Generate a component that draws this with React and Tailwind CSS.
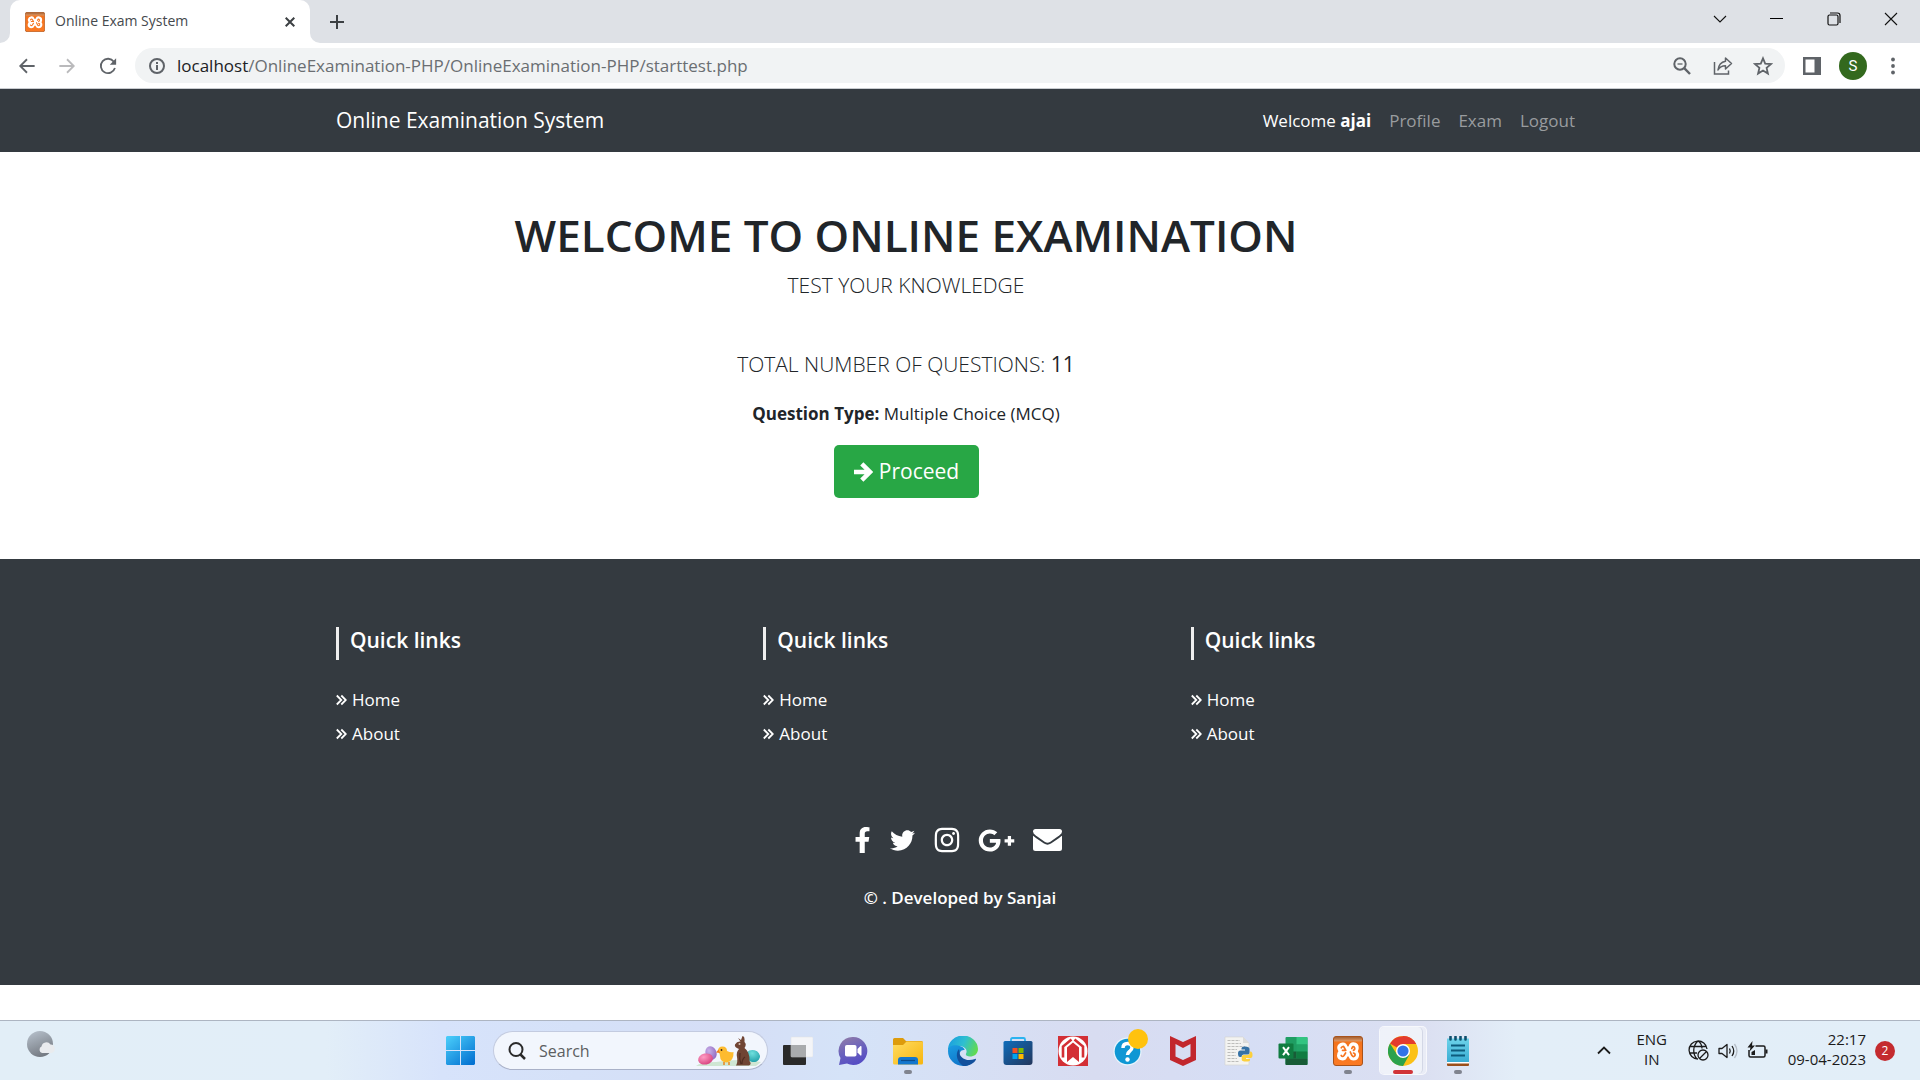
import React from "react";
import {
  FaFacebookF,
  FaTwitter,
  FaInstagram,
  FaGooglePlusG,
  FaEnvelope,
} from "react-icons/fa";

function XamppIcon({ className }) {
  return (
    <svg viewBox="0 0 30 30" className={className} aria-hidden="true">
      <defs>
        <linearGradient id="xamppTop" x1="0" y1="0" x2="0" y2="1">
          <stop offset="0" stopColor="#9c5a2c" />
          <stop offset="0.14" stopColor="#d9905c" />
          <stop offset="0.2" stopColor="#f4731d" />
          <stop offset="1" stopColor="#fb7a24" />
        </linearGradient>
      </defs>
      <rect x="0.5" y="0.5" width="29" height="29" rx="2.5" fill="url(#xamppTop)" stroke="#a9531b" />
      <path
        d="M9.500 6.500Q13 6 14.300 10Q15 11 15.700 10Q17 6 20.500 6.300Q26 7 25.700 12Q25.500 14 24.800 15.200Q26.500 17.500 26 20Q25 24.500 20.500 24.500Q17 24.500 15.800 21Q15 19.500 14.200 21Q13 24.500 9.500 24.500Q4.500 24 4 20Q3.800 17 5.400 15.200Q4 13 4.200 11Q5 7 9.500 6.500Z"
        fill="#fff"
      />
      <path
        d="M8.300 11.800Q10 9.300 11.200 11.500L12.800 14.300H9.500M8.200 19.500Q9.500 21.500 11 19.500L12.600 17M18.800 12.500Q20 9.300 21.500 11.500Q22.300 13.500 20.500 14.300M17.300 16L18.800 19.300Q20.500 21.700 22 19.500Q22.500 17.500 20.500 17"
        fill="none"
        stroke="#f6741f"
        strokeWidth="1.700"
        strokeLinecap="round"
        strokeLinejoin="round"
      />
    </svg>
  );
}

function Stroke({ size = "h-5 w-5", box = "0 0 20 20", width = 2, children }) {
  return (
    <svg
      viewBox={box}
      className={size}
      fill="none"
      stroke="currentColor"
      strokeWidth={width}
      aria-hidden="true"
    >
      {children}
    </svg>
  );
}

function TabStrip() {
  return (
    <div className="flex h-[43px] bg-[#dee1e6] pl-[10px]">
      <div className="relative flex h-full w-[300px] items-center rounded-t-[10px] bg-white pr-[10px] pl-[15px]">
        <svg viewBox="0 0 10 10" className="absolute bottom-0 -left-[10px] h-[10px] w-[10px]" aria-hidden="true">
          <path d="M10 0V10H0A10 10 0 0 0 10 0Z" fill="#fff" />
        </svg>
        <svg viewBox="0 0 10 10" className="absolute -right-[10px] bottom-0 h-[10px] w-[10px]" aria-hidden="true">
          <path d="M0 0V10H10A10 10 0 0 1 0 0Z" fill="#fff" />
        </svg>
        <XamppIcon className="h-5 w-5" />
        <span className="ml-[10px] flex-1 pb-0.5 text-[14px] whitespace-nowrap text-[#45494d]">Online Exam System</span>
        <button aria-label="Close tab" className="flex h-5 w-5 items-center justify-center text-[#3c4043]">
          <Stroke size="h-[10px] w-[10px]" box="0 0 10 10">
            <path d="M0.700 0.700L9.300 9.300M9.300 0.700L0.700 9.300" />
          </Stroke>
        </button>
      </div>
      <button aria-label="New tab" className="ml-[17px] flex w-5 items-center justify-center text-[#3c4043]">
        <Stroke size="h-4 w-4" box="0 0 16 16">
          <path d="M8 1V15M1 8H15" />
        </Stroke>
      </button>
      <div className="ml-auto flex h-[37px] text-[#111]">
        <button aria-label="Search tabs" className="flex w-[57px] items-center justify-center">
          <Stroke size="h-[14px] w-[14px]" box="0 0 14 14" width={1.1}>
            <path d="M1 4L7 10L13 4" />
          </Stroke>
        </button>
        <button aria-label="Minimize" className="flex w-[57px] items-center justify-center">
          <span className="h-px w-[13px] bg-black" />
        </button>
        <button aria-label="Restore" className="flex w-[57px] items-center justify-center">
          <Stroke size="h-[14px] w-[14px]" box="0 0 14 14" width={1.2}>
            <rect x="1" y="3" width="10" height="10" rx="1.500" />
            <path d="M3 1H10.500Q13 1 13 3.500V11" />
          </Stroke>
        </button>
        <button aria-label="Close" className="flex w-[58px] items-center justify-center">
          <Stroke size="h-[14px] w-[14px]" box="0 0 14 14" width={1.1}>
            <path d="M1 1L13 13M13 1L1 13" />
          </Stroke>
        </button>
      </div>
    </div>
  );
}

function Toolbar() {
  return (
    <div className="flex h-[46px] items-center border-b border-[#c9ccd0] bg-white pl-[17px] text-[#5f6368]">
      <button aria-label="Back" className="w-5">
        <Stroke size="h-[18px] w-5">
          <path d="M18.500 10H3M10 2.500L2.500 10L10 17.500" />
        </Stroke>
      </button>
      <button aria-label="Forward" className="ml-5 w-5 text-[#bababc]">
        <Stroke size="h-[18px] w-5">
          <path d="M1.500 10H17M10 2.500L17.500 10L10 17.500" />
        </Stroke>
      </button>
      <button aria-label="Reload" className="ml-[21px] w-5">
        <Stroke size="h-[18px] w-5">
          <path d="M16.500 5.200A8 8 0 1 0 17.700 12.300" />
          <path d="M19 1.500V8.500H12Z" fill="currentColor" stroke="none" />
        </Stroke>
      </button>
      <div className="ml-[17px] flex h-[35px] flex-1 items-center rounded-full bg-[#f1f3f4] pr-3 pl-[14px]">
        <Stroke size="h-4 w-4" box="0 0 16 16">
          <circle cx="8" cy="8" r="7" />
          <path d="M8 7V12M8 4V6" />
        </Stroke>
        <div className="ml-3 flex-1 text-[17px] leading-6 whitespace-nowrap text-[#6a6e72]">
          <span className="text-[#202124]">localhost</span>/OnlineExamination-PHP/OnlineExamination-PHP/starttest.php
        </div>
        <button aria-label="Zoom" className="w-5">
          <Stroke size="h-[18px] w-[18px]" box="0 0 18 18">
            <circle cx="7" cy="7" r="5.700" />
            <path d="M11.200 11.200L17 17" strokeWidth="2.400" />
            <path d="M4.500 7H9.500" strokeWidth="1.300" />
          </Stroke>
        </button>
        <button aria-label="Share" className="ml-5 w-5">
          <Stroke width={1.5}>
            <path d="M1.500 6V18H15.500V14.500" />
            <path d="M12.500 2L18.500 7.500L12.500 13V9.800C9 9.800 6.500 11 5 14C5.500 9.500 8 6 12.500 5.200Z" strokeLinejoin="round" />
          </Stroke>
        </button>
        <button aria-label="Bookmark" className="ml-5 w-5">
          <Stroke width={1.8}>
            <path d="M10 2.300L12.200 7.600L18 8.100L13.600 11.900L14.900 17.500L10 14.500L5.100 17.500L6.400 11.900L2 8.100L7.800 7.600Z" />
          </Stroke>
        </button>
      </div>
      <button aria-label="Side panel" className="ml-[18px] w-[18px]">
        <svg viewBox="0 0 18 18" className="h-[18px] w-[18px]" aria-hidden="true">
          <path d="M0 0H18V18H0ZM2.500 2.500V15.500H11.500V2.500Z" fill="#5f6368" fillRule="evenodd" />
        </svg>
      </button>
      <button className="ml-[18px] h-7 w-7 rounded-full bg-[#33691e] text-center font-[Roboto,_sans-serif] text-[15px] leading-7 text-white">S</button>
      <button aria-label="Menu" className="mr-[17px] ml-4 w-5">
        <svg viewBox="0 0 20 20" className="h-5 w-5" fill="currentColor" aria-hidden="true">
          <circle cx="10" cy="3.500" r="1.900" />
          <circle cx="10" cy="10" r="1.900" />
          <circle cx="10" cy="16.500" r="1.900" />
        </svg>
      </button>
    </div>
  );
}

function SiteNav() {
  return (
    <nav className="h-[63px] bg-[#343a40]">
      <div className="mx-auto flex h-full max-w-[1282px] items-center px-[17px]">
        <a href="#home" className="text-[21px] whitespace-nowrap text-white">Online Examination System</a>
        <div className="ml-auto flex gap-[18px] pr-[9px] text-[17px] whitespace-nowrap text-[#999c9f]">
          <a href="#me" className="text-white">
            Welcome <b>ajai</b>
          </a>
          <a href="#profile">Profile</a>
          <a href="#exam">Exam</a>
          <a href="#logout">Logout</a>
        </div>
      </div>
    </nav>
  );
}

function Hero() {
  return (
    <main className="mx-auto w-full max-w-[1282px] px-[17px] pt-14 pb-[61px] text-[#212529]">
      <div className="flex flex-col items-center pr-[108px] text-center">
        <h1 className="text-[44px] leading-[54px] font-semibold whitespace-nowrap">WELCOME TO ONLINE EXAMINATION</h1>
        <p className="mt-[6px] text-[21px] leading-[34px] font-light">TEST YOUR KNOWLEDGE</p>
        <p className="mt-[45px] text-[21px] leading-[34px] font-light">
          TOTAL NUMBER OF QUESTIONS: <span className="font-normal">11</span>
        </p>
        <p className="mt-[19px] text-[17px] leading-[27px]">
          <b>Question Type:</b> Multiple Choice (MCQ)
        </p>
        <button className="mt-[18px] flex h-[53px] w-[145px] items-center justify-center gap-[6px] rounded-[5px] bg-[#28a745] text-[21px] text-white">
          <svg viewBox="0 0 20 20" className="h-5 w-5" fill="none" stroke="currentColor" strokeWidth="4.500" aria-hidden="true">
            <path d="M1 10H17M8.800 1.800L17 10L8.800 18.200" />
          </svg>
          Proceed
        </button>
      </div>
    </main>
  );
}

function QuickLinks() {
  return (
    <section className="px-[17px]">
      <h5 className="h-[33px] border-l-[3px] border-[#eee] pl-[11px] text-[21px] leading-[27px] font-semibold">Quick links</h5>
      <ul className="mt-[23px] text-[17px] leading-[34px]">
        {["Home", "About"].map((label) => (
          <li key={label}>
            <a href={"#" + label} className="flex items-center gap-[5px]">
              <svg viewBox="0 0 11 12" className="h-3 w-[11px]" fill="none" stroke="currentColor" strokeWidth="1.800" aria-hidden="true">
                <path d="M0.800 1.500L5.300 6L0.800 10.500M5.300 1.500L9.800 6L5.300 10.500" />
              </svg>
              {label}
            </a>
          </li>
        ))}
      </ul>
    </section>
  );
}

function SiteFooter() {
  return (
    <footer className="h-[426px] bg-[#343a40] pt-[68px] text-white">
      <div className="mx-auto grid max-w-[1282px] grid-cols-3">
        <QuickLinks />
        <QuickLinks />
        <QuickLinks />
      </div>
      <div className="mt-[75px] flex h-[28px] items-center justify-center pr-[5px]">
        <a href="#facebook" aria-label="Facebook" className="mr-[19px]">
          <FaFacebookF className="h-[26px] w-[17px]" />
        </a>
        <a href="#twitter" aria-label="Twitter" className="mr-[19px]">
          <FaTwitter className="h-[25px] w-[25px]" />
        </a>
        <a href="#instagram" aria-label="Instagram" className="mr-[18px]">
          <FaInstagram className="h-[28px] w-[26px]" />
        </a>
        <a href="#google" aria-label="Google Plus" className="mr-[18px]">
          <FaGooglePlusG className="h-[37px] w-[37px]" />
        </a>
        <a href="#mail" aria-label="Email">
          <svg viewBox="0 0 29 22" className="h-[22px] w-[29px]" fill="currentColor" aria-hidden="true">
            <path d="M2.500 0H26.500Q29 0 29 2.500Q29 4.500 26.500 6.300L17 13Q14.500 14.600 12 13L2.500 6.300Q0 4.500 0 2.500Q0 0 2.500 0Z" />
            <path d="M0 6.700Q1 7.700 11 14.500Q14.500 16.800 18 14.500Q28 7.700 29 6.700V19.500Q29 22 26.500 22H2.500Q0 22 0 19.500Z" />
          </svg>
        </a>
      </div>
      <p className="mt-[30px] text-center text-[17px] leading-[27px] font-semibold">© . Developed by Sanjai</p>
    </footer>
  );
}

function StartIcon() {
  return (
    <svg viewBox="0 0 29 29" className="h-[29px] w-[29px]" aria-hidden="true">
      <defs>
        <linearGradient id="winBlue" gradientUnits="userSpaceOnUse" x1="0" y1="0" x2="24" y2="29">
          <stop offset="0" stopColor="#4cd0fb" />
          <stop offset="1" stopColor="#0573d2" />
        </linearGradient>
      </defs>
      <path d="M1 0H14V14H0V1ZM15 0H28L29 1V14H15ZM0 15H14V29H1L0 28ZM15 15H29V28L28 29H15Z" fill="url(#winBlue)" />
    </svg>
  );
}

function EasterArt() {
  return (
    <svg viewBox="0 0 66 32" className="h-8 w-[66px]" aria-hidden="true">
      <defs>
        <radialGradient id="eggPink" cx="0.4" cy="0.3" r="0.8">
          <stop offset="0" stopColor="#ff9cc4" />
          <stop offset="1" stopColor="#d33a78" />
        </radialGradient>
        <radialGradient id="eggLilac" cx="0.4" cy="0.3" r="0.8">
          <stop offset="0" stopColor="#c9b0e8" />
          <stop offset="1" stopColor="#8a62bd" />
        </radialGradient>
        <radialGradient id="eggTeal" cx="0.4" cy="0.3" r="0.8">
          <stop offset="0" stopColor="#6fe0dd" />
          <stop offset="1" stopColor="#1b9ba5" />
        </radialGradient>
      </defs>
      <path d="M0 31Q4 27 20 27Q45 23 65 27L60 31Z" fill="#cfe6d3" />
      <ellipse cx="15" cy="18" rx="5.500" ry="7" fill="url(#eggLilac)" transform="rotate(-20 15 18)" />
      <ellipse cx="9.500" cy="24" rx="7.500" ry="5.500" fill="url(#eggPink)" transform="rotate(-12 9.500 24)" />
      <path d="M22 16Q22 11.500 26.500 11.500Q31 11.500 31 16Q35 18 37.500 17Q38 26 31 27.500Q24 27 24 21Q24 19 22 16Z" fill="#fdbb2f" />
      <path d="M22.500 14.500L20 17.500L24 18Z" fill="#f07d1b" />
      <circle cx="25.500" cy="15" r="0.900" fill="#3b2415" />
      <path d="M28 27V30M33 27V30" stroke="#e88720" strokeWidth="1.500" />
      <ellipse cx="57" cy="21" rx="7" ry="6" fill="url(#eggTeal)" transform="rotate(15 57 21)" />
      <path d="M45 5L46.500 1Q49 1 48.500 7Q51 9 48.500 13Q54 17 53.500 26Q56 29 53 30.500H40Q42 27 41 22Q40 17 43 14Q38 12 39 9.500Q41 6 44.500 6.500L42 3Z" fill="#704534" />
      <circle cx="43.500" cy="9" r="1" fill="#d9c3b5" />
      <path d="M44 18Q43 24 45 29M49 22Q46 24 46 29" stroke="#4f2d20" strokeWidth="1.200" fill="none" />
    </svg>
  );
}

const glyphClass = "h-[30px] w-[30px]";

const taskIcons = [
  {
    name: "Task view",
    art: (
      <svg viewBox="0 0 30 30" className={glyphClass}>
        <rect x="0" y="9" width="23" height="20" rx="1" fill="#2a2a2a" />
        <rect x="8" y="1" width="22" height="20" rx="1" fill="#f7f7f7" fillOpacity="0.900" stroke="#e2e2e2" strokeWidth="0.500" />
        <path d="M8 9H23V21H8Z" fill="#a9abad" />
      </svg>
    ),
  },
  {
    name: "Chat",
    art: (
      <svg viewBox="0 0 30 30" className={glyphClass}>
        <defs>
          <linearGradient id="chatFill" x1="0.200" y1="0" x2="0.600" y2="1">
            <stop offset="0" stopColor="#8f7ba8" />
            <stop offset="0.500" stopColor="#6a62bd" />
            <stop offset="1" stopColor="#544bc4" />
          </linearGradient>
        </defs>
        <path d="M15 1A14 14 0 1 1 9 27.500L1 29L2.500 22A14 14 0 0 1 15 1Z" fill="url(#chatFill)" />
        <rect x="7" y="9" width="11.500" height="11.500" rx="1.800" fill="#fff" />
        <path d="M19.500 13L22.500 10Q23.500 9.500 23.500 11V18.500Q23.500 20 22.500 19.500L19.500 16.500Z" fill="#fff" />
      </svg>
    ),
  },
  {
    name: "File Explorer",
    mark: "gray",
    art: (
      <svg viewBox="0 0 30 30" className={glyphClass}>
        <defs>
          <linearGradient id="folderFill" x1="0" y1="0" x2="1" y2="1">
            <stop offset="0" stopColor="#ffdc62" />
            <stop offset="1" stopColor="#f7b50e" />
          </linearGradient>
        </defs>
        <path d="M0 3.500Q0 2 1.500 2H10L13 5H28.500Q30 5 30 6.500V12H0Z" fill="#dd9b0c" />
        <path d="M0 9H10L13.500 5.500H29Q30 5.500 30 7V27Q30 28.500 28.500 28.500H1.500Q0 28.500 0 27Z" fill="url(#folderFill)" />
        <path d="M5 28.500V24Q5 21 8 21H22Q25 21 25 24V28.500Z" fill="#1377ce" />
        <path d="M8 24.500H22" stroke="#0b4c8c" strokeWidth="1.200" />
      </svg>
    ),
  },
  {
    name: "Edge",
    art: (
      <svg viewBox="0 0 30 30" className={glyphClass}>
        <defs>
          <linearGradient id="edgeTop" x1="0" y1="0.300" x2="1" y2="0.600">
            <stop offset="0" stopColor="#1a9fe0" />
            <stop offset="0.500" stopColor="#2fbfd0" />
            <stop offset="1" stopColor="#63db4c" />
          </linearGradient>
          <linearGradient id="edgeLeft" x1="0" y1="0" x2="0.500" y2="1">
            <stop offset="0" stopColor="#1b9de2" />
            <stop offset="1" stopColor="#0f74c9" />
          </linearGradient>
        </defs>
        <path d="M0 14A15 14 0 0 1 30 13C30 18 26 20.500 22 20.500C18.500 20.500 17 19 18.300 17C19.500 14 17 10.500 12 10C6 9.500 1.500 12 0 14Z" fill="url(#edgeTop)" />
        <path d="M0 15C0 9.500 6 8.500 10 9.500C15 10.500 17 13 16.500 14C12.500 13.500 11 17 12 20C14 26 20 28.500 24 26.500C21.500 29.500 18 30 15 30A15 15 0 0 1 0 15Z" fill="url(#edgeLeft)" />
        <path d="M11 13C6.500 18 9.500 27 15.500 30C21 30 26 27.500 28 23.500C28 22.500 27.500 22.700 27 23C18 26.500 10.500 21 11.500 15Z" fill="#12509c" />
      </svg>
    ),
  },
  {
    name: "Microsoft Store",
    art: (
      <svg viewBox="0 0 30 30" className={glyphClass}>
        <defs>
          <linearGradient id="bagFill" x1="0" y1="0" x2="1" y2="1">
            <stop offset="0" stopColor="#0f6dbb" />
            <stop offset="1" stopColor="#23365c" />
          </linearGradient>
        </defs>
        <path d="M8 6V3.500Q8 2 9.500 2H20.500Q22 2 22 3.500V6" fill="none" stroke="#2bb3f0" strokeWidth="1.800" />
        <path d="M2 5H28Q29.500 5 29.500 6.500V26Q29.500 29 26.500 29H3.500Q0.500 29 0.500 26V6.500Q0.500 5 2 5Z" fill="url(#bagFill)" />
        <path d="M9.500 12H14.500V17H9.500Z" fill="#f25022" />
        <path d="M15.500 12H20.500V17H15.500Z" fill="#7fba00" />
        <path d="M9.500 18H14.500V23H9.500Z" fill="#00a4ef" />
        <path d="M15.500 18H20.500V23H15.500Z" fill="#ffb900" />
      </svg>
    ),
  },
  {
    name: "Reader",
    art: (
      <svg viewBox="0 0 30 30" className={glyphClass}>
        <path d="M0 0H30V30H0Z" fill="#d32f35" />
        <circle cx="15" cy="15" r="14.500" fill="#fff" />
        <path d="M9 26V11.500L15 6.500L21 11.500V26L15 21Z" fill="#d32f35" />
        <path d="M5 21.500V10.500L13.500 3.500M25 21.500V10.500L16.500 3.500" fill="none" stroke="#d32f35" strokeWidth="2.600" />
      </svg>
    ),
  },
  {
    name: "Help",
    badge: true,
    art: (
      <svg viewBox="0 0 30 30" className={glyphClass}>
        <circle cx="14.500" cy="15.500" r="14" fill="#e9f5fc" />
        <circle cx="14.500" cy="15.500" r="12.800" fill="#0f97d4" />
        <path d="M10 12Q10 7.500 14.500 7.500Q19 7.500 19 11.500Q19 13.500 16.500 15.500Q14.500 17 14.500 19" fill="none" stroke="#fff" strokeWidth="3.500" />
        <circle cx="14.500" cy="23.500" r="2.200" fill="#fff" />
      </svg>
    ),
  },
  {
    name: "McAfee",
    art: (
      <svg viewBox="0 0 30 30" className={glyphClass}>
        <path d="M2 0L15 6L28 0V24L15 30L2 24ZM7.500 8V20.500L15 24L22.500 20.500V8L15 12Z" fill="#c2272d" fillRule="evenodd" />
      </svg>
    ),
  },
  {
    name: "Python file",
    art: (
      <svg viewBox="0 0 30 30" className={glyphClass}>
        <path d="M2 1H20L26 7V29H2Z" fill="#f3f3f1" stroke="#d5d5d3" strokeWidth="0.700" />
        <path d="M20 1V7H26Z" fill="#dcdcda" />
        <path d="M4.500 4.500H17M4.500 7.500H18M4.500 10.500H22M4.500 13.500H14M4.500 16.500H13M4.500 19.500H13M4.500 22.500H14M4.500 25.500H16" stroke="#bdbdbb" strokeWidth="1" strokeDasharray="3 1" />
        <path d="M22 10.500Q26.500 10.500 26.500 13V17Q26.500 18.500 24.500 18.500H20.500Q18.500 18.500 18.500 21H17Q15 21 15 17.500Q15 14.500 17.500 14.500H22V13.500H18.500V12.500Q18.500 10.500 22 10.500Z" fill="#3672a5" />
        <path d="M23 25.500Q18.700 25.500 18.700 23.500V21Q18.700 19 20.700 19H24.500Q27 19 27 15.500H27.500Q29.500 15.500 29.500 19Q29.500 22 27.500 22H23V23H27V24Q27 25.500 23 25.500Z" fill="#fcd03d" />
      </svg>
    ),
  },
  {
    name: "Excel",
    art: (
      <svg viewBox="0 0 30 30" className={glyphClass}>
        <rect x="7.500" y="1" width="22" height="28" rx="1" fill="#1f9e63" />
        <path d="M18.500 1H28.500Q29.500 1 29.500 2V8.500H18.500Z" fill="#33c481" />
        <path d="M18.500 8.500H29.500V15.500H18.500Z" fill="#21a366" />
        <path d="M7.500 15.500H18.500V22.500H7.500Z" fill="#185c37" />
        <path d="M18.500 15.500H29.500V22.500H18.500Z" fill="#107c41" />
        <path d="M7.500 22.500H29.500V28Q29.500 29 28.500 29H8.500Q7.500 29 7.500 28Z" fill="#185c37" />
        <rect x="0.500" y="7.500" width="15" height="15" rx="1" fill="#107c41" />
        <path d="M5 11.200L11 19.200M11 11.200L5 19.200" stroke="#fff" strokeWidth="2" />
      </svg>
    ),
  },
  { name: "XAMPP", mark: "gray", art: <XamppIcon className="h-[30px] w-[30px]" /> },
  {
    name: "Chrome",
    mark: "red",
    active: true,
    art: (
      <svg viewBox="0 0 30 30" className={glyphClass}>
        <circle cx="15" cy="15" r="15" fill="#fbc116" />
        <path d="M15 15L2 7.500A15 15 0 0 1 28 8H15Z" fill="#e33b2e" />
        <path d="M2 7.500A15 15 0 0 0 15 30L21.500 18.500L9 18.500Z" fill="#2ba24c" />
        <path d="M15 0A15 15 0 0 1 28 8H15Z" fill="#e33b2e" />
        <circle cx="15" cy="15" r="7" fill="#fff" />
        <circle cx="15" cy="15" r="5.600" fill="#2f73e8" />
      </svg>
    ),
  },
  {
    name: "Notepad",
    mark: "gray",
    art: (
      <svg viewBox="0 0 30 30" className={glyphClass}>
        <defs>
          <linearGradient id="noteFill" x1="0" y1="0" x2="0" y2="1">
            <stop offset="0" stopColor="#6dd3ea" />
            <stop offset="1" stopColor="#39acd3" />
          </linearGradient>
        </defs>
        <path d="M4 26H26V29Q26 30 25 30H5Q4 30 4 29Z" fill="#9a4f1b" />
        <path d="M4 2.500H26V26H4Z" fill="url(#noteFill)" />
        <path d="M4 26H26V27.500H4Z" fill="#fff" />
        <path d="M8 9.500H22M8 14.500H22M8 19.500H22" stroke="#0d5b7d" strokeWidth="1.800" />
        <path d="M7.500 0.800V3.500M12.500 0.800V3.500M17.500 0.800V3.500M22.500 0.800V3.500" stroke="#0d4f6d" strokeWidth="2.600" strokeLinecap="round" />
      </svg>
    ),
  },
];

function TaskButton({ item }) {
  return (
    <button aria-label={item.name} className="relative flex h-full w-[55px] items-center justify-center">
      {item.active && (
        <span className="absolute top-[5px] left-[4px] h-[49px] w-[48px] rounded-[5px] border border-white/60 bg-white/40">
          <span className="block h-full w-[43px] rounded-[5px] border-r border-[#d3d7e6] bg-white/30" />
        </span>
      )}
      <span className="relative">{item.art}</span>
      {item.badge && <span className="absolute top-[8px] right-[7px] h-5 w-5 rounded-full bg-[#ffc20e]" />}
      {item.mark === "gray" && <span className="absolute bottom-[6px] left-[24px] h-1 w-2 rounded-full bg-[#80848f]" />}
      {item.mark === "red" && <span className="absolute bottom-[6px] left-[18px] h-1 w-5 rounded-full bg-[#d13438]" />}
    </button>
  );
}

function Taskbar() {
  return (
    <div className="grid h-[60px] grid-cols-[1fr_auto_1fr] border-t border-[#adb5c2] bg-[linear-gradient(90deg,#e2eef7_0%,#e2eef8_17%,#d7e3fb_23%,#d5e1f8_30%,#d5def6_38%,#d5e3f8_44%,#d8dcf1_57%,#d6def5_65%,#dbdff1_74%,#e3eef8_79%,#e2eef8_100%)]">
      <button aria-label="Weather" className="ml-[26px] h-[50px] w-[30px]">
        <svg viewBox="0 0 30 30" className="-mt-[3px] h-[30px] w-[30px]" aria-hidden="true">
          <defs>
            <linearGradient id="moonFill" x1="0.200" y1="0" x2="0.600" y2="1">
              <stop offset="0" stopColor="#b5bfca" />
              <stop offset="1" stopColor="#737880" />
            </linearGradient>
          </defs>
          <circle cx="14" cy="14" r="13" fill="url(#moonFill)" />
          <path d="M16 23A3.500 3.500 0 0 1 15.500 16.500A5 5 0 0 1 24.500 14.500A4.300 4.300 0 0 1 25.500 23Z" fill="#e9ebee" />
        </svg>
      </button>

      <div className="flex items-center">
        <button aria-label="Start" className="flex w-[50px] items-center justify-center">
          <StartIcon />
        </button>
        <label className="mr-0.5 ml-2 flex h-[39px] w-[275px] items-center rounded-full border border-[#c3cbe0] border-b-[#a9b1c8] bg-[#f2f6fd] pr-[5px] pl-[14px]">
          <Stroke size="h-[18px] w-[18px] text-[#2b2b2b]" box="0 0 18 18" width={2}>
            <circle cx="8" cy="7.500" r="6.500" />
            <path d="M12.500 12.500L17 17" strokeWidth="2.500" />
          </Stroke>
          <input
            aria-label="Search"
            placeholder="Search"
            className="ml-[13px] w-0 flex-1 bg-transparent text-[16px] outline-none placeholder:text-[#5c5e61]"
          />
          <EasterArt />
        </label>
        <div className="flex h-full">
          {taskIcons.map((item) => (
            <TaskButton key={item.name} item={item} />
          ))}
        </div>
      </div>

      <div className="flex items-center justify-end pr-[25px] text-[15px] leading-5 text-[#1b1b1b]">
        <button aria-label="Show hidden icons" className="w-4">
          <Stroke size="h-4 w-4" box="0 0 16 16" width={1.8}>
            <path d="M2 10.500L8 4.500L14 10.500" />
          </Stroke>
        </button>
        <button className="ml-6 w-8 pb-[3px] text-center">
          ENG
          <br />
          IN
        </button>
        <button aria-label="Network, volume and battery" className="ml-5 flex items-center gap-[9px]">
          <Stroke size="h-[21px] w-[21px]" box="0 0 21 21" width={1.3}>
            <path d="M10 19A9 9 0 1 1 19 9M10 1C4.500 6 4.500 14 9 19M10 1C13 3 14 6 14 8.500M1.500 6.500H18.500M1.500 13H9" />
            <circle cx="15" cy="15" r="5" />
            <path d="M11.500 18.500L18.500 11.500" />
          </Stroke>
          <Stroke size="h-[20px] w-[20px]" box="0 0 20 20" width={1.3}>
            <path d="M1 7.500H4L9 3.500V16.500L4 12.500H1Z" strokeLinejoin="round" />
            <path d="M11.500 7.500Q13 10 11.500 12.500M14 5Q17.500 10 14 15" />
            <path d="M16.500 3Q21.500 10 16.500 17" stroke="#b5bdc6" />
          </Stroke>
          <Stroke size="h-[20px] w-[21px]" box="0 0 21 20" width={1.5}>
            <path d="M8.500 5H16.500Q18 5 18 6.500V14.500Q18 16 16.500 16H3.500Q2 16 2 14.500V9" />
            <path d="M18.500 8.500H20.500V12.500H18.500Z" fill="currentColor" stroke="none" />
            <path d="M4.500 14V11L8 9V14Z" fill="currentColor" stroke="none" />
            <path d="M5.500 0L0.500 6.500H3.500L2.500 10.500L8 4.500H5Z" fill="currentColor" stroke="none" />
          </Stroke>
        </button>
        <button className="ml-5 pb-[3px] text-right">
          22:17
          <br />
          09-04-2023
        </button>
        <span className="ml-[9px] h-5 w-5 rounded-full bg-[#c42b2f] text-center text-[12px] leading-5 text-white">2</span>
      </div>
    </div>
  );
}

export default function App() {
  return (
    <div className="flex min-h-screen flex-col bg-white font-['Open_Sans',_'Noto_Sans',_sans-serif]">
      <TabStrip />
      <Toolbar />
      <SiteNav />
      <Hero />
      <SiteFooter />
      <div className="mt-auto">
        <Taskbar />
      </div>
    </div>
  );
}
